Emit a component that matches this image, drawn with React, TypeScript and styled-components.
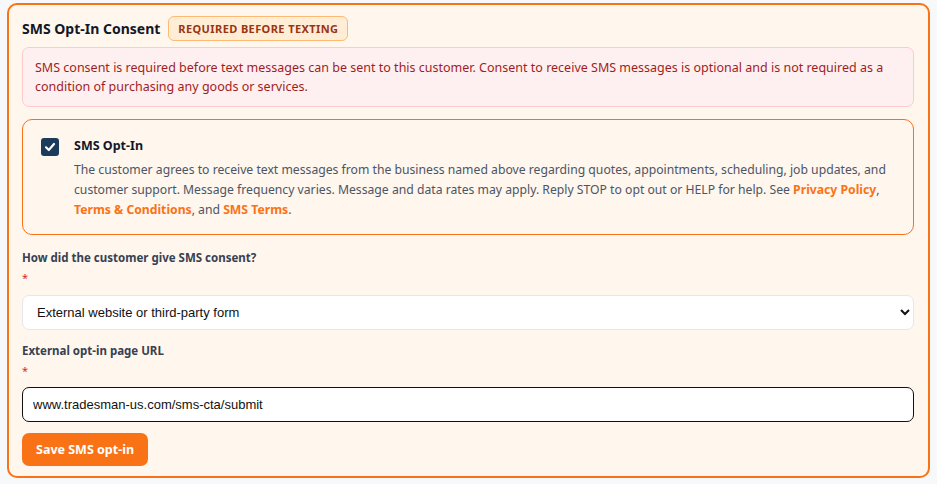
import React from "react";
import styled, { createGlobalStyle } from "styled-components";

const GlobalStyle = createGlobalStyle`
    html, body {
        margin: 0;
        padding: 0;
        background: #f7f8fa;
        font-family: "Noto Sans", "Open Sans", sans-serif;
    }
    * {
        box-sizing: border-box;
    }
`;

const Page = styled.div`
    padding: 3px 7px 5px 7px;
`;

const Card = styled.section`
    border: 2px solid #f97316;
    border-radius: 10px;
    background: #fff6ee;
    padding: 11px 14px 10px 13px;
    display: flex;
    flex-direction: column;
`;

const TitleRow = styled.div`
    display: flex;
    align-items: center;
    gap: 8px;
    margin-bottom: 6px;
`;

const Title = styled.h2`
    margin: 0;
    font-size: 14px;
    font-weight: 700;
    color: #111827;
`;

const Badge = styled.span`
    display: inline-flex;
    align-items: center;
    height: 25px;
    padding: 0 9px;
    border: 1px solid #fdba74;
    border-radius: 6px;
    background: #ffedd5;
    color: #9a3412;
    font-size: 11px;
    font-weight: 700;
    letter-spacing: 0.4px;
    text-transform: uppercase;
`;

const Alert = styled.div`
    border: 1px solid #fecaca;
    border-radius: 7px;
    background: #fef0f0;
    color: #a11d1d;
    font-size: 12.5px;
    line-height: 19px;
    padding: 10px 12px;
    margin-bottom: 12px;
`;

const OptInBox = styled.label`
    display: flex;
    gap: 15px;
    border: 1px solid #f97316;
    border-radius: 10px;
    padding: 17px 14px 14px 18px;
    margin-bottom: 15px;
`;

const CheckBox = styled.span`
    flex: 0 0 auto;
    width: 18px;
    height: 18px;
    margin-top: 1px;
    border-radius: 3px;
    background: #1b3a5c;
    display: flex;
    align-items: center;
    justify-content: center;
`;

const OptInText = styled.div`
    display: flex;
    flex-direction: column;
    gap: 6px;
`;

const OptInTitle = styled.span`
    font-size: 12.5px;
    font-weight: 700;
    color: #111827;
    line-height: 17px;
`;

const OptInBody = styled.p`
    margin: 0;
    font-size: 12.2px;
    line-height: 20px;
    color: #4b5563;
`;

const Link = styled.a`
    color: #f97316;
    font-weight: 700;
    text-decoration: none;
`;

const FieldLabel = styled.div`
    font-size: 11.5px;
    font-weight: 700;
    color: #374151;
    line-height: 16px;
`;

const Required = styled.div<{ $gap: number }>`
    color: #dc2626;
    font-size: 11px;
    line-height: 16px;
    margin: 4px 0 ${(p) => p.$gap}px;
`;

const Select = styled.select`
    width: 100%;
    height: 35px;
    padding: 0 9px 0 10px;
    border: 1px solid #e5e7eb;
    border-radius: 7px;
    background: #fff;
    color: #111;
    font-family: "Liberation Sans", Arial, sans-serif;
    font-size: 13px;
    margin-bottom: 13px;
`;

const TextInput = styled.input`
    width: 100%;
    height: 35px;
    padding: 0 10px;
    border: 1px solid #111;
    border-radius: 7px;
    background: #fff;
    color: #111;
    font-family: "Liberation Sans", Arial, sans-serif;
    font-size: 13px;
    outline: none;
    margin-bottom: 11px;
`;

const SaveButton = styled.button`
    align-self: flex-start;
    height: 33px;
    padding: 0 14px;
    border: none;
    border-radius: 7px;
    background: #f97316;
    color: #fff;
    font-family: "Noto Sans", sans-serif;
    font-size: 12.5px;
    font-weight: 700;
    cursor: pointer;
`;

const App: React.FC = () => {
    return (
        <>
            <GlobalStyle />
            <Page>
                <Card>
                    <TitleRow>
                        <Title>SMS Opt-In Consent</Title>
                        <Badge>Required before texting</Badge>
                    </TitleRow>
                    <Alert>
                        SMS consent is required before text messages can be sent to this customer. Consent to
                        receive SMS messages is optional and is not required as a condition of purchasing any
                        goods or services.
                    </Alert>
                    <OptInBox>
                        <CheckBox>
                            <svg width="12" height="12" viewBox="0 0 12 12" fill="none">
                                <path
                                    d="M2 6.3 L4.8 9 L10 3"
                                    stroke="#fff"
                                    strokeWidth="2.2"
                                    strokeLinecap="round"
                                    strokeLinejoin="round"
                                />
                            </svg>
                        </CheckBox>
                        <OptInText>
                            <OptInTitle>SMS Opt-In</OptInTitle>
                            <OptInBody>
                                The customer agrees to receive text messages from the business named above
                                regarding quotes, appointments, scheduling, job updates, and customer support.
                                Message frequency varies. Message and data rates may apply. Reply STOP to opt out
                                or HELP for help. See <Link href="#">Privacy Policy</Link>,{" "}
                                <Link href="#">Terms &amp; Conditions</Link>, and <Link href="#">SMS Terms</Link>.
                            </OptInBody>
                        </OptInText>
                    </OptInBox>
                    <FieldLabel>How did the customer give SMS consent?</FieldLabel>
                    <Required $gap={9}>*</Required>
                    <Select defaultValue="external">
                        <option value="in_person">In person</option>
                        <option value="external">External website or third-party form</option>
                    </Select>
                    <FieldLabel>External opt-in page URL</FieldLabel>
                    <Required $gap={8}>*</Required>
                    <TextInput defaultValue="www.tradesman-us.com/sms-cta/submit" />
                    <SaveButton>Save SMS opt-in</SaveButton>
                </Card>
            </Page>
        </>
    );
};

export default App;
